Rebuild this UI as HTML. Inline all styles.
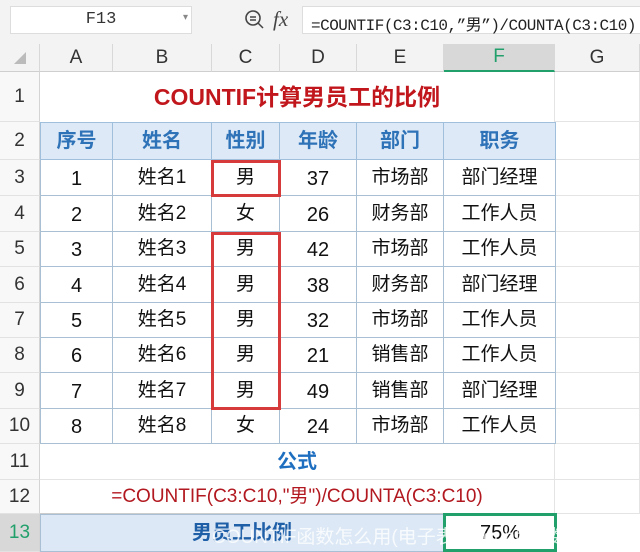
<!DOCTYPE html>
<html><head><meta charset="utf-8"><style>
*{margin:0;padding:0;box-sizing:border-box}
body{width:640px;height:552px;overflow:hidden;background:#fff;font-family:"Liberation Sans","Noto Sans CJK SC",sans-serif;position:relative}
.a{position:absolute}
.c{position:absolute;display:flex;align-items:center;justify-content:center;white-space:nowrap;line-height:22px}
.rh{left:0;width:40px;color:#333;font-size:19px;background:#f8f8f8;border-bottom:1px solid #e2e2e2;border-right:1px solid #d4d4d4}
.ch{top:44px;height:28px;color:#333;font-size:19px;background:#f3f3f3;border-right:1px solid #d8d8d8;border-bottom:1px solid #cfcfcf}
.d{font-size:19px;color:#111;border-right:1px solid #a9bfd4;border-bottom:1px solid #a9bfd4}
.d span{display:inline-block;height:22px;line-height:22px}
.h{font-size:20px;color:#2e72b8;font-weight:bold;background:#dde9f6;border-right:1px solid #9fbfdc;border-bottom:1px solid #9fbfdc}
.g{border-right:1px solid #e4e4e4;border-bottom:1px solid #e4e4e4}
.n{font-size:20px;padding-top:2px}
</style></head><body>
<div class="a" style="left:0;top:0;width:640px;height:44px;background:#f3f3f3"></div>
<div class="c" style="left:10px;top:6px;width:182px;height:28px;background:#fff;border:1px solid #ddd;font-family:'Liberation Mono',monospace;font-size:17px;color:#333">F13</div>
<div class="a" style="left:183px;top:12px;font-size:10px;color:#888">▾</div>
<svg class="a" style="left:244px;top:9px" width="22" height="22" viewBox="0 0 22 22"><circle cx="9" cy="9" r="7" fill="none" stroke="#444" stroke-width="1.6"/><path d="M14 14l5 5M6 8h6M6 11h6" stroke="#444" stroke-width="1.5"/></svg>
<div class="a" style="left:273px;top:7px;font-family:'Liberation Serif',serif;font-style:italic;font-size:21px;color:#444">fx</div>
<div class="a" style="left:302px;top:6px;width:345px;height:28px;background:#fff;border:1px solid #ddd;font-family:'Liberation Mono','Noto Sans CJK SC',monospace;font-size:16px;color:#222;padding:4px 0 0 8px;letter-spacing:-0.5px;white-space:nowrap">=COUNTIF(C3:C10,”男”)/COUNTA(C3:C10)</div>

<div class="c ch" style="left:0;width:40px"><svg width="16" height="16"><path d="M14 2V14H2Z" fill="#bbb"/></svg></div>
<div class="c ch" style="left:40px;width:73px">A</div>
<div class="c ch" style="left:113px;width:99px">B</div>
<div class="c ch" style="left:212px;width:68px">C</div>
<div class="c ch" style="left:280px;width:77px">D</div>
<div class="c ch" style="left:357px;width:87px">E</div>
<div class="c ch" style="left:444px;width:111px;background:#d8d8d8;color:#22a06b;border-bottom:2px solid #22a06b">F</div>
<div class="c ch" style="left:555px;width:85px">G</div>

<div class="c rh" style="top:72px;height:50px">1</div>
<div class="c rh" style="top:122px;height:38px">2</div>
<div class="c rh" style="top:160px;height:36px">3</div>
<div class="c rh" style="top:196px;height:36px">4</div>
<div class="c rh" style="top:232px;height:35px">5</div>
<div class="c rh" style="top:267px;height:36px">6</div>
<div class="c rh" style="top:303px;height:35px">7</div>
<div class="c rh" style="top:338px;height:35px">8</div>
<div class="c rh" style="top:373px;height:36px">9</div>
<div class="c rh" style="top:409px;height:35px">10</div>
<div class="c rh" style="top:444px;height:36px">11</div>
<div class="c rh" style="top:480px;height:34px">12</div>
<div class="c rh" style="top:514px;height:38px;background:#d8d8d8;color:#22a06b">13</div>

<div class="a g" style="left:555px;top:72px;width:85px;height:50px"></div>
<div class="a g" style="left:555px;top:122px;width:85px;height:38px"></div>
<div class="a g" style="left:555px;top:160px;width:85px;height:36px"></div>
<div class="a g" style="left:555px;top:196px;width:85px;height:36px"></div>
<div class="a g" style="left:555px;top:232px;width:85px;height:35px"></div>
<div class="a g" style="left:555px;top:267px;width:85px;height:36px"></div>
<div class="a g" style="left:555px;top:303px;width:85px;height:35px"></div>
<div class="a g" style="left:555px;top:338px;width:85px;height:35px"></div>
<div class="a g" style="left:555px;top:373px;width:85px;height:36px"></div>
<div class="a g" style="left:555px;top:409px;width:85px;height:35px"></div>
<div class="a g" style="left:555px;top:444px;width:85px;height:36px"></div>
<div class="a g" style="left:555px;top:480px;width:85px;height:34px"></div>

<div class="c" style="left:40px;top:72px;width:515px;height:50px;border-right:1px solid #e4e4e4;color:#c0161c;font-weight:bold;font-size:23px">COUNTIF计算男员工的比例</div>

<div class="c h" style="left:40px;top:122px;width:73px;height:38px;border-left:1px solid #9fbfdc;border-top:1px solid #9fbfdc">序号</div>
<div class="c h" style="left:113px;top:122px;width:99px;height:38px;border-top:1px solid #9fbfdc">姓名</div>
<div class="c h" style="left:212px;top:122px;width:68px;height:38px;border-top:1px solid #9fbfdc">性别</div>
<div class="c h" style="left:280px;top:122px;width:77px;height:38px;border-top:1px solid #9fbfdc">年龄</div>
<div class="c h" style="left:357px;top:122px;width:87px;height:38px;border-top:1px solid #9fbfdc">部门</div>
<div class="c h" style="left:444px;top:122px;width:112px;height:38px;border-top:1px solid #9fbfdc">职务</div>

<div class="c d n" style="left:40px;top:160px;width:73px;height:36px;border-left:1px solid #a9bfd4">1</div><div class="c d" style="left:113px;top:160px;width:99px;height:36px">姓名1</div><div class="c d" style="left:212px;top:160px;width:68px;height:36px">男</div><div class="c d n" style="left:280px;top:160px;width:77px;height:36px">37</div><div class="c d" style="left:357px;top:160px;width:87px;height:36px">市场部</div><div class="c d" style="left:444px;top:160px;width:112px;height:36px">部门经理</div>
<div class="c d n" style="left:40px;top:196px;width:73px;height:36px;border-left:1px solid #a9bfd4">2</div><div class="c d" style="left:113px;top:196px;width:99px;height:36px">姓名2</div><div class="c d" style="left:212px;top:196px;width:68px;height:36px">女</div><div class="c d n" style="left:280px;top:196px;width:77px;height:36px">26</div><div class="c d" style="left:357px;top:196px;width:87px;height:36px">财务部</div><div class="c d" style="left:444px;top:196px;width:112px;height:36px">工作人员</div>
<div class="c d n" style="left:40px;top:232px;width:73px;height:35px;border-left:1px solid #a9bfd4">3</div><div class="c d" style="left:113px;top:232px;width:99px;height:35px">姓名3</div><div class="c d" style="left:212px;top:232px;width:68px;height:35px">男</div><div class="c d n" style="left:280px;top:232px;width:77px;height:35px">42</div><div class="c d" style="left:357px;top:232px;width:87px;height:35px">市场部</div><div class="c d" style="left:444px;top:232px;width:112px;height:35px">工作人员</div>
<div class="c d n" style="left:40px;top:267px;width:73px;height:36px;border-left:1px solid #a9bfd4">4</div><div class="c d" style="left:113px;top:267px;width:99px;height:36px">姓名4</div><div class="c d" style="left:212px;top:267px;width:68px;height:36px">男</div><div class="c d n" style="left:280px;top:267px;width:77px;height:36px">38</div><div class="c d" style="left:357px;top:267px;width:87px;height:36px">财务部</div><div class="c d" style="left:444px;top:267px;width:112px;height:36px">部门经理</div>
<div class="c d n" style="left:40px;top:303px;width:73px;height:35px;border-left:1px solid #a9bfd4">5</div><div class="c d" style="left:113px;top:303px;width:99px;height:35px">姓名5</div><div class="c d" style="left:212px;top:303px;width:68px;height:35px">男</div><div class="c d n" style="left:280px;top:303px;width:77px;height:35px">32</div><div class="c d" style="left:357px;top:303px;width:87px;height:35px">市场部</div><div class="c d" style="left:444px;top:303px;width:112px;height:35px">工作人员</div>
<div class="c d n" style="left:40px;top:338px;width:73px;height:35px;border-left:1px solid #a9bfd4">6</div><div class="c d" style="left:113px;top:338px;width:99px;height:35px">姓名6</div><div class="c d" style="left:212px;top:338px;width:68px;height:35px">男</div><div class="c d n" style="left:280px;top:338px;width:77px;height:35px">21</div><div class="c d" style="left:357px;top:338px;width:87px;height:35px">销售部</div><div class="c d" style="left:444px;top:338px;width:112px;height:35px">工作人员</div>
<div class="c d n" style="left:40px;top:373px;width:73px;height:36px;border-left:1px solid #a9bfd4">7</div><div class="c d" style="left:113px;top:373px;width:99px;height:36px">姓名7</div><div class="c d" style="left:212px;top:373px;width:68px;height:36px">男</div><div class="c d n" style="left:280px;top:373px;width:77px;height:36px">49</div><div class="c d" style="left:357px;top:373px;width:87px;height:36px">销售部</div><div class="c d" style="left:444px;top:373px;width:112px;height:36px">部门经理</div>
<div class="c d n" style="left:40px;top:409px;width:73px;height:35px;border-left:1px solid #a9bfd4">8</div><div class="c d" style="left:113px;top:409px;width:99px;height:35px">姓名8</div><div class="c d" style="left:212px;top:409px;width:68px;height:35px">女</div><div class="c d n" style="left:280px;top:409px;width:77px;height:35px">24</div><div class="c d" style="left:357px;top:409px;width:87px;height:35px">市场部</div><div class="c d" style="left:444px;top:409px;width:112px;height:35px">工作人员</div>

<div class="a" style="left:211px;top:160px;width:70px;height:37px;border:3px solid #d63a3a"></div>
<div class="a" style="left:211px;top:232px;width:70px;height:178px;border:3px solid #d63a3a"></div>

<div class="c" style="left:40px;top:444px;width:515px;height:36px;border-bottom:1px solid #e4e4e4;border-right:1px solid #e4e4e4;color:#1f6fc0;font-weight:bold;font-size:20px">公式</div>
<div class="c" style="left:40px;top:480px;width:515px;height:34px;border-bottom:1px solid #ccc;border-right:1px solid #e4e4e4;color:#b2181f;font-size:19px">=COUNTIF(C3:C10,"男")/COUNTA(C3:C10)</div>
<div class="c" style="left:40px;top:514px;width:404px;height:38px;background:#dce8f5;border:1px solid #a9bfd4;color:#1f5fa8;font-weight:bold;font-size:20px">男员工比例</div>
<div class="c" style="left:443px;top:513px;width:114px;height:39px;background:#fff;border:3px solid #22a06b;color:#111;font-size:20px">75%</div>
<div class="a" style="left:212px;top:522px;font-size:19px;color:rgba(255,255,255,0.8);white-space:nowrap">COUNTIF函数怎么用(电子表格countif函数怎么用)</div>
</body></html>
